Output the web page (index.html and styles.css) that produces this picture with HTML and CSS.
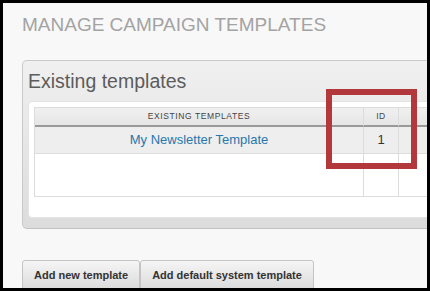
FILE: index.html
```html
<!DOCTYPE html>
<html>
<head>
<meta charset="utf-8">
<link rel="stylesheet" href="styles.css">
</head>
<body>
<div class="frame">
  <h1 class="title">MANAGE CAMPAIGN TEMPLATES</h1>
  <div class="panel">
    <h2 class="panel-title">Existing templates</h2>
    <div class="panel-body">
      <table class="grid">
        <thead>
          <tr>
            <th class="c-name">EXISTING TEMPLATES</th>
            <th class="c-id">ID</th>
            <th class="c-act">&nbsp;</th>
          </tr>
        </thead>
        <tbody>
          <tr class="row-data">
            <td class="c-name"><a href="#" class="link">My Newsletter Template</a></td>
            <td class="c-id">1</td>
            <td class="c-act">&nbsp;</td>
          </tr>
          <tr class="row-empty">
            <td class="c-name">&nbsp;</td>
            <td class="c-id">&nbsp;</td>
            <td class="c-act">&nbsp;</td>
          </tr>
        </tbody>
      </table>
    </div>
  </div>
  <div class="actions">
    <button class="btn">Add new template</button><button class="btn">Add default system template</button>
  </div>
  <div class="highlight"></div>
</div>
</body>
</html>
```

FILE: styles.css
```css
html, body {
  margin: 0;
  padding: 0;
  background: #000;
  height: 291px;
  overflow: hidden;
}

.frame {
  position: relative;
  margin: 3px;
  width: 424px;
  height: 285px;
  background: #f8f8f8;
  overflow: hidden;
  box-sizing: border-box;
  padding: 11px 0 0 19px;
  font-family: "Liberation Sans", Arial, sans-serif;
}

.title {
  margin: 0 0 24px 0;
  font-size: 19px;
  line-height: 22px;
  font-weight: normal;
  color: #a3a3a3;
  white-space: nowrap;
}

.panel {
  width: 520px;
  border: 1px solid #c9c9c9;
  border-bottom-color: #c2c2c2;
  border-radius: 5px 0 0 5px;
  background: linear-gradient(#f0f0f0, #dcdcdc);
  padding: 8px 0 10px 5px;
}

.panel-title {
  margin: 0 0 8px 0;
  font-size: 19.5px;
  line-height: 24px;
  font-weight: normal;
  color: #5c5c5c;
}

.panel-body {
  background: #fff;
  border: 1px solid #e4e4e4;
  border-radius: 4px 0 0 4px;
  padding: 5px 0 20px 5px;
}

.grid {
  border-collapse: separate;
  border-spacing: 0;
  border-left: 1px solid #dcdcdc;
  border-top: 1px solid #dcdcdc;
  width: 480px;
  table-layout: fixed;
}

.grid th,
.grid td {
  padding: 0;
  text-align: center;
  border-right: 1px solid #dcdcdc;
  border-bottom: 1px solid #dcdcdc;
}

.grid th {
  height: 17px;
  line-height: 17px;
  font-size: 8.5px;
  font-weight: normal;
  letter-spacing: 0.6px;
  color: #444;
  background: linear-gradient(#f0f0f0, #e6e6e6);
  border-bottom: 2px solid #999;
}

.c-name { width: 328px; }
.c-id { width: 34px; }
.c-act { width: auto; }

.row-data td {
  height: 26px;
  line-height: 26px;
  font-size: 13px;
  color: #333;
  background: #eeeeee;
}

.row-empty td {
  height: 42px;
  line-height: 42px;
  background: #fff;
}

.link {
  color: #2877ab;
  text-decoration: none;
}

.actions {
  margin-top: 31px;
  display: flex;
}

.btn {
  font-family: "Liberation Sans", Arial, sans-serif;
  font-size: 11px;
  font-weight: bold;
  line-height: 13px;
  color: #333;
  background: linear-gradient(#f5f5f5, #dadada);
  border: 1px solid #c4c4c4;
  border-radius: 3px 3px 0 0;
  padding: 8px 11px 8px 11px;
  margin: 0;
  white-space: nowrap;
}

.highlight {
  position: absolute;
  left: 323px;
  top: 86px;
  width: 79px;
  height: 68px;
  border: 6px solid #b2383c;
}
```
